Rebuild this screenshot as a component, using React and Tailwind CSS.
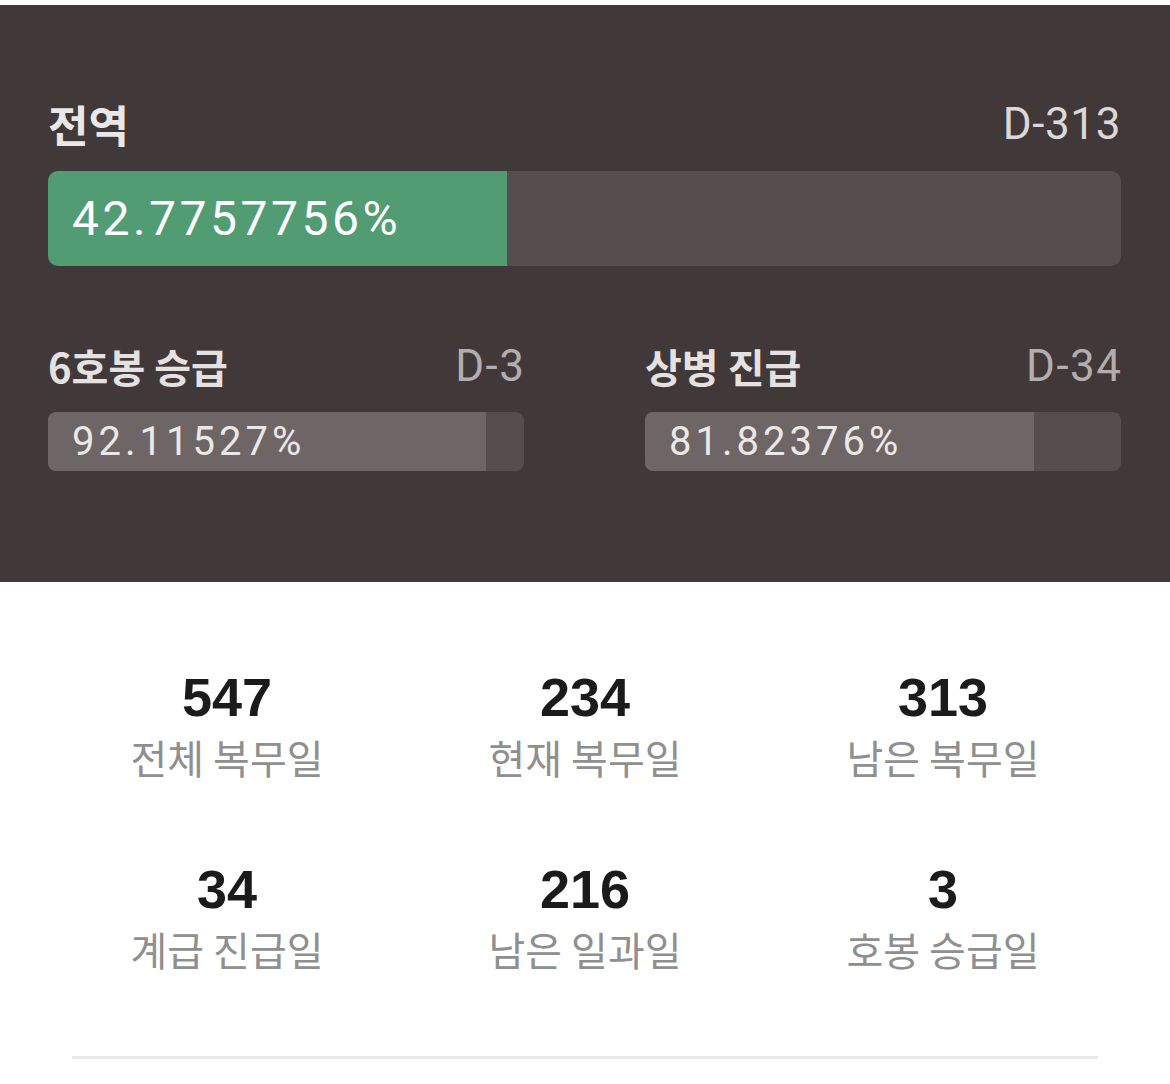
import React from "react";

const KR = { fontFamily: '"Noto Sans CJK KR", "Noto Sans", sans-serif' };
const NUM = { fontFamily: 'Roboto, "Noto Sans CJK KR", sans-serif' };
const BOLDNUM = { fontFamily: '"Liberation Sans", Arial, sans-serif' };

const service = {
  label: "전역",
  dday: "D-313",
  percent: 42.7757756,
};

const subGoals = [
  { label: "6호봉 승급", dday: "D-3", percent: 92.11527 },
  { label: "상병 진급", dday: "D-34", percent: 81.82376 },
];

const stats = [
  { value: 547, label: "전체 복무일" },
  { value: 234, label: "현재 복무일" },
  { value: 313, label: "남은 복무일" },
  { value: 34, label: "계급 진급일" },
  { value: 216, label: "남은 일과일" },
  { value: 3, label: "호봉 승급일" },
];

function SubGoal({ goal }) {
  return (
    <div className="flex flex-col">
      <div className="flex items-center justify-between h-[44px]">
        <span className="text-[40px] font-bold leading-none text-[#e6e1e1]" style={KR}>
          {goal.label}
        </span>
        <span className="text-[44px] leading-none text-[#b3adad] tracking-[1.5px] -mr-[1.5px]" style={NUM}>
          {goal.dday}
        </span>
      </div>
      <div className="mt-[24px] relative h-[59px] rounded-[8px] bg-[#564d4e] overflow-hidden">
        <div className="h-full bg-[#6e6666]" style={{ width: `${goal.percent}%` }} />
        <span
          className="absolute left-[24px] top-0 h-full flex items-center text-[40px] leading-none text-[#ece8e8] tracking-[4px]"
          style={NUM}
        >
          {goal.percent}%
        </span>
      </div>
    </div>
  );
}

export default function App() {
  return (
    <div className="bg-white pt-[5px] min-h-[1084px]">
      {/* dark summary panel */}
      <section className="bg-[#413839] h-[577px] pl-12 pr-[49px] pt-[94px]">
        <div className="flex items-center justify-between h-[50px]">
          <span className="text-[44px] font-bold leading-none text-[#ebe7e7]" style={KR}>
            {service.label}
          </span>
          <span className="text-[44px] leading-none text-[#ddd8d8] tracking-[0.6px]" style={NUM}>
            {service.dday}
          </span>
        </div>
        <div className="mt-[22px] relative h-[95px] rounded-[10px] bg-[#564d4e] overflow-hidden">
          <div className="h-full bg-[#529c74]" style={{ width: `${service.percent}%` }} />
          <span
            className="absolute left-[24px] top-0 h-full flex items-center text-[48px] leading-none text-white tracking-[3.5px]"
            style={NUM}
          >
            {service.percent}%
          </span>
        </div>

        <div className="grid grid-cols-2 gap-x-[121px] mt-[78px]">
          {subGoals.map((g) => (
            <SubGoal key={g.label} goal={g} />
          ))}
        </div>
      </section>

      {/* day counters */}
      <section className="px-12 pt-[88px]">
        <div className="grid grid-cols-3 gap-y-[85px]">
          {stats.map((s) => (
            <div key={s.label} className="flex flex-col items-center">
              <span className="text-[54px] font-bold leading-none text-[#1b1b1b]" style={BOLDNUM}>
                {s.value}
              </span>
              <span className="mt-[13px] text-[40px] leading-none text-[#8f8f8f]" style={KR}>
                {s.label}
              </span>
            </div>
          ))}
        </div>
        <div className="mx-6 mt-[87px] h-[3px] bg-[#e9e9e9]" />
      </section>
    </div>
  );
}
